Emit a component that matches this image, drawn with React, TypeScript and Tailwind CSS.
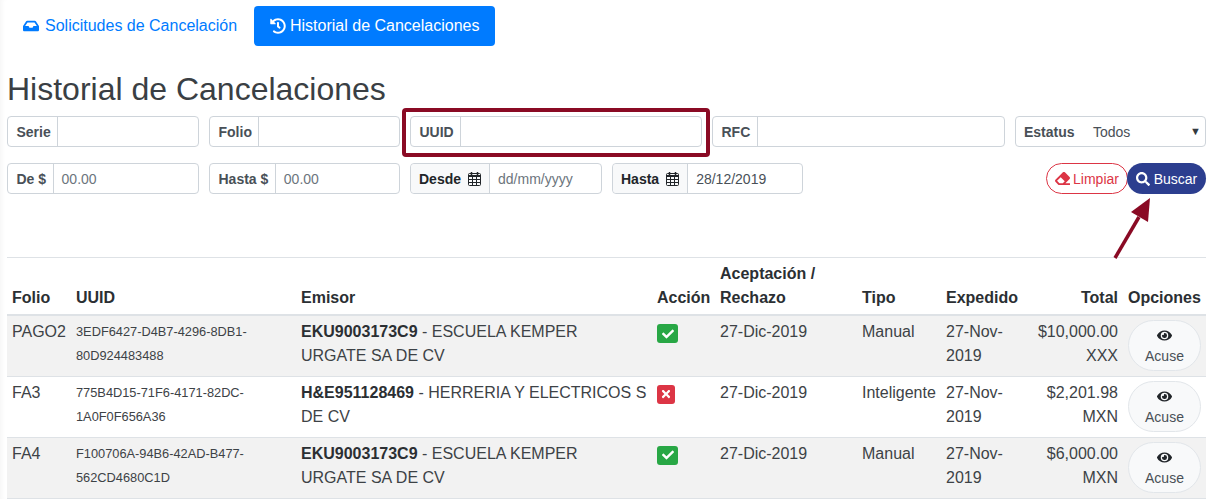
import type { ReactNode } from 'react'
import { FaInbox, FaHistory, FaEraser, FaSearch, FaEye, FaCheck, FaTimes } from 'react-icons/fa'

type Row = {
  folio: string
  uuid: [string, string]
  rfc: string
  name: string
  ok: boolean
  tipo: string
  total: string
  currency: string
}

const rows: Row[] = [
  { folio: 'PAGO2', uuid: ['3EDF6427-D4B7-4296-8DB1-', '80D924483488'], rfc: 'EKU9003173C9', name: 'ESCUELA KEMPER URGATE SA DE CV', ok: true, tipo: 'Manual', total: '$10,000.00', currency: 'XXX' },
  { folio: 'FA3', uuid: ['775B4D15-71F6-4171-82DC-', '1A0F0F656A36'], rfc: 'H&E951128469', name: 'HERRERIA Y ELECTRICOS S DE CV', ok: false, tipo: 'Inteligente', total: '$2,201.98', currency: 'MXN' },
  { folio: 'FA4', uuid: ['F100706A-94B6-42AD-B477-', '562CD4680C1D'], rfc: 'EKU9003173C9', name: 'ESCUELA KEMPER URGATE SA DE CV', ok: true, tipo: 'Manual', total: '$6,000.00', currency: 'MXN' },
]

function CalendarIcon() {
  return (
    <svg width="13" height="14" viewBox="0 0 13 14" fill="none" stroke="currentColor" className="shrink-0">
      <rect x="0.5" y="1.5" width="12" height="12" rx="1" />
      <path d="M0 4h13" strokeWidth="2" />
      <path d="M4.5 5v8M8.5 5v8M1 7.5h11M1 10.5h11" />
      <path d="M3.5 0v3M9.5 0v3" strokeWidth="1.5" />
    </svg>
  )
}

function Field({ label, width, placeholder, value, date }: { label: string; width: string; placeholder?: string; value?: string; date?: boolean }) {
  return (
    <div className={`flex h-[31px] shrink-0 rounded border border-[#ced4da] bg-white text-sm ${width}`}>
      <div className={`flex items-center gap-[7px] border-r border-[#ced4da] font-bold rounded-l ${date ? 'bg-[#f8f9fa] pl-2 pr-2 text-[#212529]' : 'pl-[8.5px] pr-[6.5px] text-[#495057]'}`}>
        {label}
        {date && <CalendarIcon />}
      </div>
      <div className={`flex items-center pl-2 ${value ? 'text-[#495057]' : 'text-[#6c757d]'}`}>{value ?? placeholder}</div>
    </div>
  )
}

function Th({ children, right }: { children: ReactNode; right?: boolean }) {
  return <th className={`px-[5px] py-1 align-bottom font-bold text-[#2b2f33] ${right ? 'text-right' : 'text-left'}`}>{children}</th>
}

export default function App() {
  return (
    <div className="relative h-[499px] w-[1218px] overflow-hidden bg-white pl-[7px] pr-3 pt-[6px] text-[#3d4246] shadow-[inset_5px_0_5px_-3px_rgba(0,0,0,0.04)] font-['Liberation_Sans',Arial,sans-serif]">
      <nav className="flex">
        <a className="flex h-10 w-[247px] items-center gap-[6px] whitespace-nowrap px-4 text-[#007bff]">
          <FaInbox className="text-base" /> Solicitudes de Cancelación
        </a>
        <a className="flex h-10 w-[241px] items-center gap-1 whitespace-nowrap rounded bg-[#007bff] pl-4 text-white">
          <FaHistory className="text-base" /> Historial de Cancelaciones
        </a>
      </nav>

      <h2 className="mt-6 mb-2 text-[32px] leading-[38px] text-[#3a3f44]">Historial de Cancelaciones</h2>

      <div className="flex gap-[10px]">
        <Field label="Serie" width="w-[192px]" />
        <Field label="Folio" width="w-[191px]" />
        <Field label="UUID" width="w-[292px]" />
        <Field label="RFC" width="w-[293px]" />
        <div className="flex h-[31px] w-[191px] items-center rounded border border-[#ced4da] pl-2 pr-[4px] text-sm text-[#495057]">
          <span className="w-[69px] font-bold">Estatus</span>
          <span>Todos</span>
          <span className="ml-auto text-[11px] text-[#343a40]">▼</span>
        </div>
      </div>

      <div className="mt-4 flex gap-[10px]">
        <Field label="De $" width="w-[192px]" placeholder="00.00" />
        <Field label="Hasta $" width="w-[191px]" placeholder="00.00" />
        <Field label="Desde" width="w-[192px]" placeholder="dd/mm/yyyy" date />
        <Field label="Hasta" width="w-[191px]" value="28/12/2019" date />
        <div className="ml-auto flex">
          <button className="flex h-[31px] w-[82px] items-center justify-center gap-[3px] rounded-full border border-[#dc3545] text-sm text-[#dc3545]">
            <FaEraser className="text-[15px]" /> Limpiar
          </button>
          <button className="-ml-px flex h-[31px] w-[79px] items-center justify-center gap-1 rounded-full bg-[#2c3e8f] text-sm text-white">
            <FaSearch className="text-[14px]" /> Buscar
          </button>
        </div>
      </div>

      <table className="mt-[63px] w-[1199px] table-fixed border-collapse text-base">
        <colgroup>
          <col className="w-[64px]" />
          <col className="w-[225px]" />
          <col className="w-[356px]" />
          <col className="w-[63px]" />
          <col className="w-[142px]" />
          <col className="w-[84px]" />
          <col className="w-[82px]" />
          <col className="w-[100px]" />
          <col className="w-[83px]" />
        </colgroup>
        <thead>
          <tr className="border-t border-b-2 border-t-[#dee2e6] border-b-[#dee2e6] leading-6">
            <Th>Folio</Th>
            <Th>UUID</Th>
            <Th>Emisor</Th>
            <Th>Acción</Th>
            <Th>Aceptación / Rechazo</Th>
            <Th>Tipo</Th>
            <Th>Expedido</Th>
            <Th right>Total</Th>
            <Th>Opciones</Th>
          </tr>
        </thead>
        <tbody>
          {rows.map((r, i) => (
            <tr key={r.folio} className={`h-[61px] border-b border-[#dee2e6] leading-6 ${i % 2 === 0 ? 'bg-[#f2f2f2]' : 'bg-white'}`}>
              <td className="px-[5px] pt-1 align-top">{r.folio}</td>
              <td className="px-[5px] pt-1 align-top text-[12.8px] leading-6">{r.uuid[0]}<br />{r.uuid[1]}</td>
              <td className="px-[5px] pt-1 align-top"><b className="text-[#2b2f33]">{r.rfc}</b> - {r.name}</td>
              <td className="px-[5px] pt-1 align-top">
                <span className={`mt-1 flex h-[19px] items-center justify-center rounded-[3px] text-xs text-white ${r.ok ? 'w-[21px] bg-[#28a745]' : 'w-[18px] bg-[#dc3545]'}`}>
                  {r.ok ? <FaCheck /> : <FaTimes />}
                </span>
              </td>
              <td className="px-[5px] pt-1 align-top">27-Dic-2019</td>
              <td className="px-[5px] pt-1 align-top">{r.tipo}</td>
              <td className="px-[5px] pt-1 align-top">27-Nov-2019</td>
              <td className="px-[5px] pt-1 text-right align-top">{r.total}<br />{r.currency}</td>
              <td className="px-[5px] py-0 align-middle">
                <button className="flex h-[51px] w-[73px] flex-col items-center justify-center rounded-full border border-[#e2e6ea] bg-[#f8f9fa] text-sm leading-[21px] text-[#495057]">
                  <span className="flex h-[21px] items-center"><FaEye className="text-[15px] text-[#212529]" /></span>
                  Acuse
                </button>
              </td>
            </tr>
          ))}
        </tbody>
      </table>

      <div className="absolute left-[402px] top-[108px] h-[49px] w-[308px] rounded-sm border-4 border-[#8a0a24]" />
      <svg className="absolute left-[1105px] top-[190px]" width="50" height="75" viewBox="0 0 50 75">
        <line x1="10" y1="68" x2="34" y2="27" stroke="#8a0a24" strokeWidth="3.5" />
        <polygon points="45,8 26,22 43,32" fill="#8a0a24" />
      </svg>
    </div>
  )
}
